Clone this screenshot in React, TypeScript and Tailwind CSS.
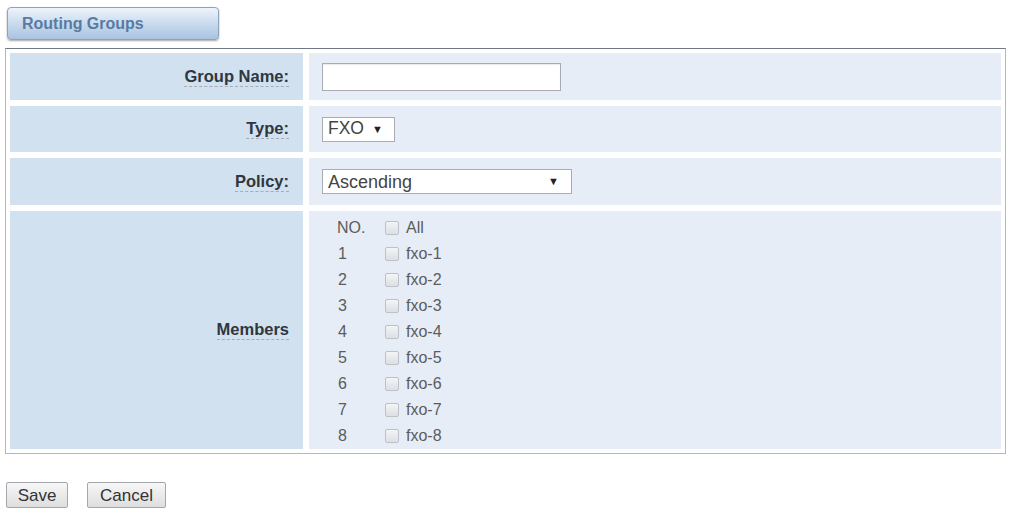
import type { ReactNode } from "react";

const members = ["fxo-1", "fxo-2", "fxo-3", "fxo-4", "fxo-5", "fxo-6", "fxo-7", "fxo-8"];

function Label({ children }: { children: ReactNode }) {
  return (
    <div className="flex items-center justify-end bg-[#d1e1ef] pr-[14px]">
      <span className="border-b border-dashed border-[#a3adb8] pb-[1px] text-[16.5px] font-bold leading-[18px] text-[#2f3640]">
        {children}
      </span>
    </div>
  );
}

function Value({ children }: { children: ReactNode }) {
  return <div className="flex items-center bg-[#e6edf7] pl-[13px]">{children}</div>;
}

function Arrow() {
  return <span className="text-[11px] text-[#222]">▼</span>;
}

function Checkbox() {
  return (
    <span className="inline-block h-[14px] w-[14px] rounded-[2px] border border-[#bcc1c8] bg-gradient-to-b from-[#f4f5f7] to-[#dcdfe3]" />
  );
}

export default function App() {
  return (
    <div className="h-[509px] w-[1012px] overflow-hidden bg-white font-['Liberation_Sans',Arial,sans-serif]">
      <div className="px-[7px] pt-[7px]">
        <div className="flex h-[33px] w-[212px] items-center rounded-[4px] border border-[#8da3bb] bg-gradient-to-b from-[#eef4fb] via-[#c9dbee] to-[#a9c3df] pl-[14px] shadow-[0_1px_2px_rgba(0,0,0,0.35)]">
          <span className="text-[16px] font-bold text-[#5a7aa1]">Routing Groups</span>
        </div>
      </div>

      <div className="mx-[5px] mt-[8px] w-[1001px] border border-[#b3b8be] border-t-[#6f7a86] bg-white">
        <div className="grid grid-cols-[293px_1fr] grid-rows-[47px_46px_47px_238px] gap-[6px] p-[4px]">
          <Label>Group Name:</Label>
          <Value>
            <div className="h-[28px] w-[239px] border border-[#a9adb3] bg-white shadow-[inset_0_1px_1px_rgba(0,0,0,0.08)]" />
          </Value>

          <Label>Type:</Label>
          <Value>
            <div className="flex h-[25px] w-[73px] items-center gap-[8px] border border-[#a9adb3] bg-white pl-[5px]">
              <span className="text-[17.5px] leading-none text-[#444]">FXO</span>
              <Arrow />
            </div>
          </Value>

          <Label>Policy:</Label>
          <Value>
            <div className="flex h-[25px] w-[250px] items-center justify-between border border-[#a9adb3] bg-white pl-[5px] pr-[12px]">
              <span className="text-[18px] leading-none text-[#444]">Ascending</span>
              <Arrow />
            </div>
          </Value>

          <Label>Members</Label>
          <div className="bg-[#e6edf7] pl-[28px] pt-[4px]">
            <div className="grid grid-cols-[48px_auto] text-[16px] leading-[26px] text-[#5c5c5c]">
              <span>NO.</span>
              <span className="flex items-center gap-[7px]">
                <Checkbox />
                <span>All</span>
              </span>
              {members.map((m, i) => (
                <div key={m} className="contents">
                  <span className="pl-[1px]">{i + 1}</span>
                  <span className="flex items-center gap-[7px]">
                    <Checkbox />
                    <span>{m}</span>
                  </span>
                </div>
              ))}
            </div>
          </div>
        </div>
      </div>

      <div className="flex gap-[19px] px-[6px] pt-[28px]">
        <button className="h-[26px] w-[62px] rounded-[2px] border border-[#a4a8ae] bg-gradient-to-b from-[#f7f7f7] to-[#dedede] text-[17px] leading-none text-[#333]">
          Save
        </button>
        <button className="h-[26px] w-[79px] rounded-[2px] border border-[#a4a8ae] bg-gradient-to-b from-[#f7f7f7] to-[#dedede] text-[17px] leading-none text-[#333]">
          Cancel
        </button>
      </div>
    </div>
  );
}
